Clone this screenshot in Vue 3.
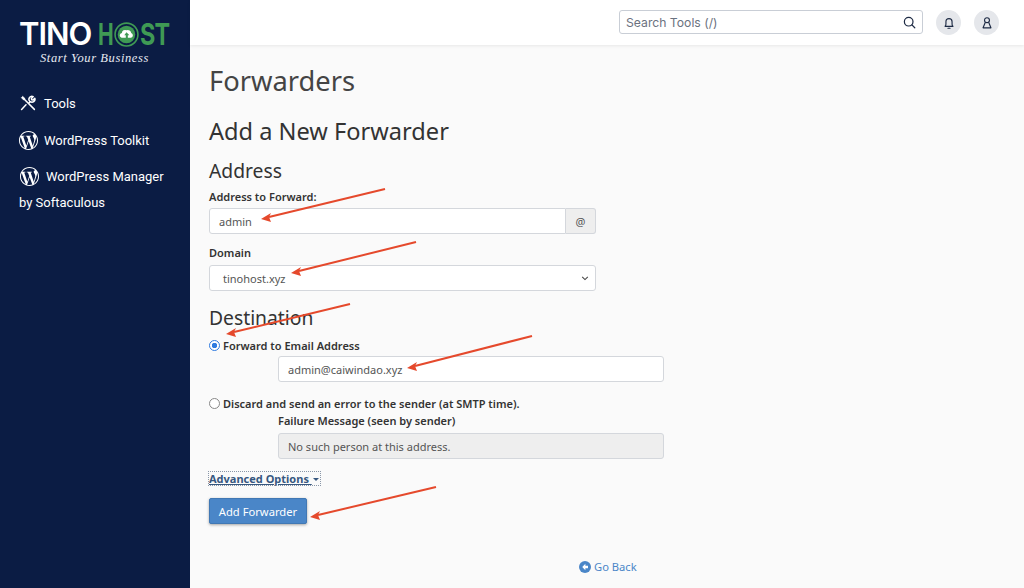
<template>
  <div class="page">
    <aside class="sidebar">
      <div class="logo">
        <div class="logo-word">
          <span class="tino">TINO</span>
          <span class="host h">H</span>
          <svg class="logo-o" viewBox="0 0 28 28" aria-hidden="true">
            <circle cx="14" cy="14" r="12.8" fill="none" stroke="#3f9a54" stroke-width="1.8" />
            <circle cx="14" cy="14" r="9.800" fill="#3f9a54" />
            <path d="M8.500 17.500a2.700 2.700 0 0 1 .3-5.300 3.600 3.600 0 0 1 5.300-2.900 3.800 3.800 0 0 1 5.200 3 2.700 2.700 0 0 1-.3 5.200h-3.500v-2.800h1.700L14 11.400l-2.500 3.300h1.700v2.800z" fill="#fff" />
          </svg>
          <span class="host st">ST</span>
        </div>
        <div class="tagline">Start Your Business</div>
      </div>

      <nav class="nav">
        <a class="nav-item">
          <svg class="tools" viewBox="0 0 16 16" aria-hidden="true">
            <path d="M6 9.800 1.600 14.400M9.700 6.300a3 3 0 0 1 3.500-4.700l-1.800 1.900.3 1.300 1.300.3 1.800-1.800a3 3 0 0 1-4.600 3.400l-1.500 1.500" fill="none" stroke="#fff" stroke-width="1.500" stroke-linecap="round" stroke-linejoin="round" />
            <path d="M4.300 4.300 14.400 14.400" stroke="#fff" stroke-width="1.500" stroke-linecap="round" />
            <path d="M1.300 2.700 2.700 1.300 5 3.600 4.700 4.700 3.600 5z" fill="#fff" stroke="#fff" stroke-width=".6" stroke-linejoin="round" />
          </svg>
          <span>Tools</span>
        </a>
        <a v-for="item in wpItems" :key="item.label" class="nav-item" :class="item.cls">
          <svg class="nav-icon" viewBox="0 0 24 24" aria-hidden="true">
            <path :d="wpPath" fill="#fff" />
          </svg>
          <span>{{ item.label }}</span>
        </a>
        <div class="nav-wrap">by Softaculous</div>
      </nav>
    </aside>

    <div class="content">
      <header class="topbar">
        <div class="search">
          <span>Search Tools (/)</span>
          <svg viewBox="0 0 16 16" width="13" height="13" aria-hidden="true">
            <circle cx="7" cy="7" r="5.300" fill="none" stroke="#1d2a44" stroke-width="1.500" />
            <path d="m11 11 3.500 3.500" stroke="#1d2a44" stroke-width="1.500" stroke-linecap="round" />
          </svg>
        </div>
        <button class="round-btn" aria-label="Notifications">
          <svg viewBox="0 0 16 16" width="14" height="14" aria-hidden="true">
            <path d="M3.500 11.800c.8-.6 1-1.500 1-2.800V6.500a3.500 3.500 0 0 1 7 0V9c0 1.300.2 2.200 1 2.800z" fill="none" stroke="#1d2a44" stroke-width="1.300" stroke-linejoin="round" />
            <path d="M6.800 14h2.400" stroke="#1d2a44" stroke-width="1.300" stroke-linecap="round" />
          </svg>
        </button>
        <button class="round-btn" aria-label="Account">
          <svg viewBox="0 0 16 16" width="14" height="14" aria-hidden="true">
            <circle cx="8" cy="4.800" r="2.800" fill="none" stroke="#1d2a44" stroke-width="1.300" />
            <path d="M6 7.500 3.500 13.500h9L10 7.500" fill="none" stroke="#1d2a44" stroke-width="1.300" stroke-linejoin="round" />
          </svg>
        </button>
      </header>

      <main class="main">
        <h1>Forwarders</h1>
        <h2>Add a New Forwarder</h2>
        <h3>Address</h3>

        <label class="field-label">Address to Forward:</label>
        <div class="input-group">
          <div class="input grow">admin</div>
          <div class="addon">@</div>
        </div>

        <label class="field-label domain-label">Domain</label>
        <div class="input select">
          <span>tinohost.xyz</span>
          <svg viewBox="0 0 10 10" width="8" height="8" aria-hidden="true">
            <path d="m1.500 3.500 3.500 3.500 3.500-3.500" fill="none" stroke="#444" stroke-width="1.300" />
          </svg>
        </div>

        <h3 class="dest">Destination</h3>

        <div class="radio-row">
          <span class="radio on"></span>
          <span>Forward to Email Address</span>
        </div>
        <div class="input indented first">admin@caiwindao.xyz</div>

        <div class="radio-row discard">
          <span class="radio"></span>
          <span>Discard and send an error to the sender (at SMTP time).</span>
        </div>
        <label class="field-label failure">Failure Message (seen by sender)</label>
        <div class="input indented disabled">No such person at this address.</div>

        <div class="advanced-row">
          <a class="advanced">Advanced Options <i class="caret"></i></a>
        </div>

        <button class="submit">Add Forwarder</button>

        <div class="back-row">
          <a class="back">
            <svg viewBox="0 0 16 16" width="12" height="12" aria-hidden="true">
              <circle cx="8" cy="8" r="8" fill="#4a86c8" />
              <path d="M8.500 3.800 4.300 8l4.200 4.200V9.700h3.500V6.300H8.500z" fill="#fff" />
            </svg>
            Go Back
          </a>
        </div>
      </main>
    </div>

    <!-- red annotation arrows drawn over the screenshot -->
    <svg class="arrows" viewBox="0 0 1024 588" aria-hidden="true">
      <g v-for="a in arrows" :key="a.x1">
        <line :x1="a.x1" :y1="a.y1" :x2="a.x2 + 8" :y2="a.y2 - 2" stroke="#e5492c" stroke-width="2" />
        <polygon :points="`${a.x2},${a.y2} ${a.x2 + 10},${a.y2 - 6} ${a.x2 + 8},${a.y2 - 2} ${a.x2 + 10},${a.y2 + 3}`" fill="#e5492c" />
      </g>
    </svg>
  </div>
</template>

<script setup>
const wpPath = 'M21.469 6.825c.84 1.537 1.318 3.3 1.318 5.175 0 3.979-2.156 7.456-5.363 9.325l3.295-9.527c.615-1.54.82-2.771.82-3.864 0-.405-.026-.78-.07-1.11m-7.981.105c.647-.03 1.232-.105 1.232-.105.582-.075.514-.93-.067-.899 0 0-1.755.135-2.88.135-1.064 0-2.85-.15-2.85-.15-.585-.03-.661.855-.075.885 0 0 .54.061 1.125.09l1.68 4.605-2.37 7.08L5.354 6.9c.649-.03 1.234-.1 1.234-.1.585-.075.516-.93-.065-.896 0 0-1.746.138-2.874.138-.2 0-.438-.008-.69-.015C4.911 3.15 8.235 1.215 12 1.215c2.809 0 5.365 1.072 7.286 2.833-.046-.003-.091-.009-.141-.009-1.06 0-1.812.923-1.812 1.914 0 .89.513 1.643 1.06 2.531.411.72.89 1.643.89 2.977 0 .915-.354 1.994-.821 3.479l-1.075 3.585-3.9-11.61.001.014zM12 22.784c-1.059 0-2.081-.153-3.048-.437l3.237-9.406 3.315 9.087c.024.053.05.101.078.149-1.12.393-2.325.609-3.582.609M1.211 12c0-1.564.336-3.05.935-4.39L7.29 21.709C3.694 19.96 1.212 16.271 1.211 12M12 0C5.385 0 0 5.385 0 12s5.385 12 12 12 12-5.385 12-12S18.615 0 12 0'

const wpItems = [
  { label: 'WordPress Toolkit', cls: '' },
  { label: 'WordPress Manager', cls: 'manager' }
]

const arrows = [
  { x1: 385, y1: 189, x2: 261, y2: 219 },
  { x1: 416, y1: 242, x2: 291, y2: 273 },
  { x1: 350, y1: 304, x2: 226, y2: 334 },
  { x1: 532, y1: 336, x2: 407, y2: 368 },
  { x1: 436, y1: 487, x2: 310, y2: 517 }
]
</script>

<style>
html,
body {
  margin: 0;
  overflow: hidden;
}
</style>

<style scoped>
.page {
  position: relative;
  display: flex;
  width: 1024px;
  height: 588px;
  overflow: hidden;
  font-family: "Noto Sans", sans-serif;
  color: #333;
  background: #fafafa;
}

.sidebar {
  width: 190px;
  flex-shrink: 0;
  background: #0b1c44;
  color: #fff;
  font-family: Roboto, sans-serif;
}

.logo {
  padding: 21px 0 0 19px;
}

.logo-word {
  display: flex;
  align-items: center;
  height: 26px;
  font-family: Inter, sans-serif;
  font-size: 31px;
  font-weight: 600;
  letter-spacing: -1px;
  line-height: 26px;
}

.tino {
  color: #fff;
  margin-right: 7px;
}

.host {
  display: inline-block;
  color: #3f9a54;
  font-size: 30px;
  font-weight: 700;
  transform-origin: left center;
}

/* logo letters are condensed */
.h {
  width: 16px;
  transform: scaleX(0.7);
}

.st {
  width: 30px;
  margin-left: 1px;
  white-space: nowrap;
  transform: scaleX(0.78);
}

.logo-o {
  width: 25px;
  height: 25px;
  flex-shrink: 0;
}

.tagline {
  margin: 4px 0 0 21px;
  font-family: "Liberation Serif", serif;
  font-style: italic;
  font-size: 12.500px;
  line-height: 14px;
  letter-spacing: 0.600px;
  color: #e8ebf2;
}

.nav {
  margin-top: 28px;
  font-size: 13px;
}

.nav-item {
  display: flex;
  align-items: center;
  height: 20px;
  margin: 0 0 16.500px 19px;
  gap: 6px;
}

.nav-item:first-child {
  margin-bottom: 17px;
}

.nav-icon {
  width: 19px;
  height: 19px;
  flex-shrink: 0;
}

.tools {
  width: 16px;
  height: 16px;
  margin: 0 2px 0 1px;
  flex-shrink: 0;
}

.manager {
  margin: 0 0 0 20px;
  gap: 7px;
}

.nav-wrap {
  margin: 6px 0 0 19px;
  line-height: 20px;
}

.content {
  flex: 1;
  min-width: 0;
  display: flex;
  flex-direction: column;
}

.topbar {
  height: 45px;
  flex-shrink: 0;
  display: flex;
  align-items: center;
  justify-content: flex-end;
  gap: 13px;
  padding-right: 25px;
  background: #fff;
  box-shadow: 0 1px 3px rgba(0, 0, 0, 0.08);
  z-index: 1;
}

.search {
  box-sizing: border-box;
  width: 304px;
  height: 24px;
  margin-bottom: 1px;
  display: flex;
  align-items: center;
  justify-content: space-between;
  padding: 0 6px;
  border: 1px solid #c9ced6;
  border-radius: 3px;
  font-family: Inter, sans-serif;
  font-size: 12.200px;
  color: #6b7280;
}

.round-btn {
  width: 25px;
  height: 25px;
  padding: 0;
  border: 0;
  border-radius: 50%;
  background: #e5e7eb;
  display: flex;
  align-items: center;
  justify-content: center;
}

.main {
  flex: 1;
  padding: 0 0 0 19px;
  font-size: 11px;
}

h1 {
  margin: 19px 0 0;
  font-size: 27.300px;
  font-weight: 400;
  line-height: 34px;
  color: #444;
}

h2 {
  margin: 18px 0 0;
  font-size: 23.600px;
  font-weight: 400;
  line-height: 30px;
  color: #333;
}

h3 {
  margin: 12px 0 0;
  font-size: 19.300px;
  font-weight: 400;
  line-height: 26px;
  color: #333;
}

.field-label {
  display: block;
  margin-top: 6px;
  font-weight: 600;
  line-height: 14px;
  color: #333;
}

.domain-label {
  margin-top: 12px;
}

.input {
  box-sizing: border-box;
  height: 26px;
  display: flex;
  align-items: center;
  padding: 0 9px;
  border: 1px solid #d4d7dc;
  border-radius: 3px;
  background: #fff;
  color: #555;
}

.input-group {
  display: flex;
  width: 387px;
  margin-top: 4px;
}

.grow {
  flex: 1;
  border-radius: 3px 0 0 3px;
}

.addon {
  box-sizing: border-box;
  width: 30px;
  height: 26px;
  display: flex;
  align-items: center;
  justify-content: center;
  border: 1px solid #d4d7dc;
  border-left: 0;
  border-radius: 0 3px 3px 0;
  background: #eee;
  color: #555;
}

.select {
  width: 387px;
  margin-top: 5px;
  padding: 0 6px 0 13px;
  justify-content: space-between;
}

.dest {
  margin-top: 14px;
}

.radio-row {
  display: flex;
  align-items: center;
  gap: 3px;
  margin-top: 7px;
  height: 14px;
  font-weight: 600;
  color: #333;
}

.radio {
  box-sizing: border-box;
  width: 11px;
  height: 11px;
  border: 1.300px solid #888;
  border-radius: 50%;
  background: #fff;
}

.radio.on {
  border: 1.500px solid #2f7be0;
  background: radial-gradient(circle, #2f7be0 0 2.500px, #fff 3px);
}

.indented {
  width: 386px;
  margin-left: 69px;
}

.first {
  margin-top: 4px;
}

.discard {
  margin-top: 14px;
}

.failure {
  margin: 4px 0 0 69px;
}

.disabled {
  margin-top: 5px;
  background: #eee;
}

.advanced-row {
  margin-top: 12px;
  height: 15px;
}

.advanced {
  display: inline-block;
  font-weight: 700;
  line-height: 13px;
  color: #36577f;
  text-decoration: underline;
  outline: 1px dotted #8a97a8;
}

.caret {
  display: inline-block;
  margin: 0 1px 2px 1px;
  border-top: 3px solid #36577f;
  border-left: 3px solid transparent;
  border-right: 3px solid transparent;
}

.submit {
  display: block;
  width: 98px;
  height: 26px;
  margin-top: 12px;
  padding: 0;
  border: 1px solid #4178b4;
  border-radius: 2px;
  background: #4a86c8;
  box-shadow: 0 1px 3px rgba(0, 0, 0, 0.35);
  font-family: inherit;
  font-size: 11.200px;
  color: #fff;
}

.back-row {
  margin-top: 35px;
  padding-left: 370px;
  font-size: 11.200px;
}

.back {
  display: inline-flex;
  align-items: center;
  gap: 3px;
  color: #4a86c8;
}

.arrows {
  position: absolute;
  inset: 0;
  width: 1024px;
  height: 588px;
  pointer-events: none;
  z-index: 2;
}
</style>
